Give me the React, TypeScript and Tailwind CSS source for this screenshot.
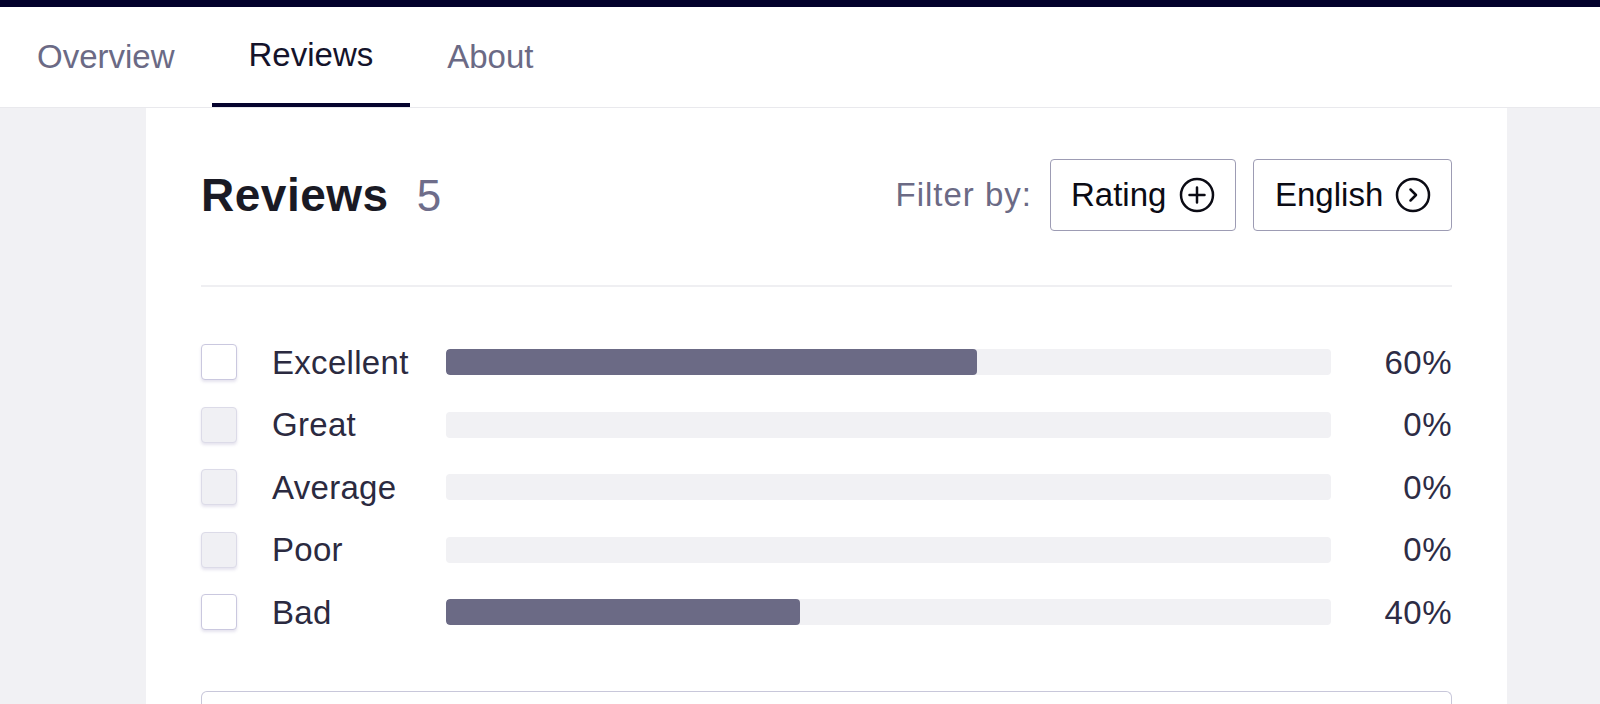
import React from 'react';

const rows = [
  { label: 'Excellent', pct: 60, enabled: true },
  { label: 'Great', pct: 0, enabled: false },
  { label: 'Average', pct: 0, enabled: false },
  { label: 'Poor', pct: 0, enabled: false },
  { label: 'Bad', pct: 40, enabled: true },
];

function CirclePlus() {
  return (
    <svg width="36" height="36" viewBox="0 0 36 36" fill="none" stroke="#0b0b14" strokeWidth="2.5" strokeLinecap="round">
      <circle cx="18" cy="18" r="16" />
      <path d="M18 10.5V25.5M10.5 18H25.5" />
    </svg>
  );
}

function CircleChevron() {
  return (
    <svg width="36" height="36" viewBox="0 0 36 36" fill="none" stroke="#0b0b14" strokeWidth="2.5" strokeLinecap="round" strokeLinejoin="round">
      <circle cx="18" cy="18" r="16" />
      <path d="M15.5 12.5L21 18L15.5 23.5" />
    </svg>
  );
}

function Tab({ label, active }: { label: string; active?: boolean }) {
  return (
    <div
      className={
        active
          ? 'h-full px-[37px] flex items-center border-b-4 border-[#05032e] text-[#14132b]'
          : 'h-full px-[37px] flex items-center text-[#6b6a85]'
      }
    >
      {label}
    </div>
  );
}

export default function App() {
  return (
    <div className="h-[704px] overflow-hidden bg-[#f1f1f4] font-['Liberation_Sans',Arial,sans-serif]">
      <div className="h-[7px] bg-[#03012c]" />
      <nav className="h-[101px] bg-white border-b border-[#e9e9ed] flex text-[33px]">
        <Tab label="Overview" />
        <Tab label="Reviews" active />
        <Tab label="About" />
      </nav>

      <main className="ml-[146px] w-[1361px] bg-white px-[55px] pt-[51px]">
        <div className="h-[72px] flex items-center justify-between">
          <h1 className="flex items-baseline gap-[28px]">
            <span className="text-[46px] font-bold text-[#1a1a24] tracking-[0.5px]">Reviews</span>
            <span className="text-[44px] text-[#6e6d8a]">5</span>
          </h1>
          <div className="flex items-center">
            <span className="text-[33px] text-[#6b6a85] tracking-[1px] mr-[18px]">Filter by:</span>
            <button className="h-[72px] w-[186px] flex items-center justify-between pl-[20px] pr-[20px] border border-[#9d9cb4] rounded-[4px] text-[33px] text-[#0b0b14]">
              Rating
              <CirclePlus />
            </button>
            <button className="ml-[17px] h-[72px] w-[199px] flex items-center justify-between pl-[21px] pr-[20px] border border-[#9d9cb4] rounded-[4px] text-[33px] text-[#0b0b14]">
              English
              <CircleChevron />
            </button>
          </div>
        </div>

        <div className="mt-[54px] h-[2px] bg-[#efeff2]" />

        <div className="mt-[44px]">
          {rows.map((r) => (
            <div key={r.label} className="h-[62.5px] flex items-center">
              <div
                className={
                  r.enabled
                    ? 'w-[36px] h-[36px] rounded-[4px] border-[1.5px] border-[#cac8df] bg-white shadow-[0_2px_3px_rgba(110,100,160,0.18)]'
                    : 'w-[36px] h-[36px] rounded-[4px] border-[1.5px] border-[#dcdbe8] bg-[#f0f0f4] shadow-[0_2px_3px_rgba(110,100,160,0.18)]'
                }
              />
              <span className="ml-[35px] w-[174px] text-[33px] text-[#2b2a40] tracking-[0.3px]">{r.label}</span>
              <div className="flex-1 h-[26px] rounded-[4px] bg-[#f1f1f4] overflow-hidden">
                <div className="h-full rounded-[4px] bg-[#6b6a85]" style={{ width: `${r.pct}%` }} />
              </div>
              <span className="w-[121px] text-right text-[33px] text-[#2d2c45] tracking-[0.5px]">{r.pct}%</span>
            </div>
          ))}
        </div>

        <div className="mt-[47px] h-[80px] border-[1.5px] border-b-0 border-[#c8c7da] rounded-t-[6px]" />
      </main>
    </div>
  );
}
